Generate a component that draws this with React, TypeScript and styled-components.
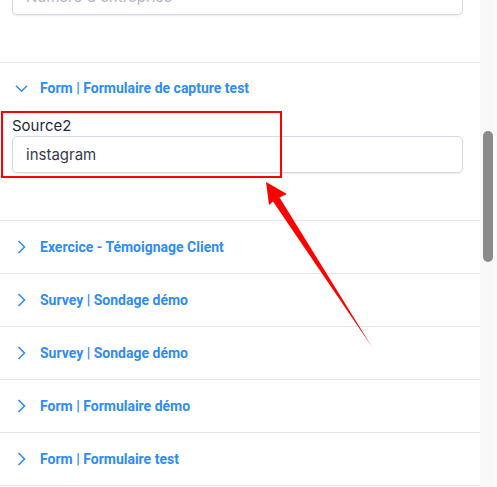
import React from "react";
import styled, { createGlobalStyle } from "styled-components";

const Global = createGlobalStyle`
  html, body { margin: 0; padding: 0; background: #ffffff; overflow: hidden; }
  body { width: 497px; height: 487px; }
  * { box-sizing: border-box; }
`;

const Frame = styled.div`
  position: relative;
  display: flex;
  width: 497px;
  height: 487px;
  overflow: hidden;
`;

const Content = styled.div`
  width: 480px;
  flex: none;
  display: flex;
  flex-direction: column;
`;

const TopField = styled.div`
  padding: 0 17px 0 12px;
  margin-top: -22px;
  height: 84px;
`;

const TextInput = styled.div<{ $placeholder?: boolean }>`
  height: 37px;
  border: 1px solid #d6d9e1;
  border-radius: 5px;
  box-shadow: 0 1px 2px rgba(30, 40, 70, 0.1);
  display: flex;
  align-items: center;
  padding: 0 13px;
  font-family: Inter, "Noto Sans", sans-serif;
  font-size: 15px;
  color: ${(p) => (p.$placeholder ? "#b3b6bd" : "#353b4b")};
`;

const Section = styled.div`
  border-top: 1px solid #e6e7ea;
`;

const Header = styled.div<{ $height: number }>`
  height: ${(p) => p.$height}px;
  display: flex;
  align-items: center;
  gap: 12px;
  padding-left: 15px;
  font-family: Roboto, "Liberation Sans", sans-serif;
  font-weight: 700;
  font-size: 14px;
  color: #2f8cf3;
`;

const IconBox = styled.span`
  width: 13px;
  height: 14px;
  display: flex;
  align-items: center;
  justify-content: center;
`;

const Body = styled.div`
  padding: 3px 17px 47px 12px;
  display: flex;
  flex-direction: column;
`;

const Label = styled.div`
  font-family: Inter, "Noto Sans", sans-serif;
  font-size: 15px;
  line-height: 20px;
  color: #1f2937;
`;

const Track = styled.div`
  width: 17px;
  flex: none;
  background: #f9f9f9;
  border-right: 2px solid #fcfcfc;
  padding: 131px 0 0 3px;
`;

const Thumb = styled.div`
  width: 10px;
  height: 131px;
  border-radius: 5px;
  background: #8b8b8b;
`;

const Highlight = styled.div`
  position: absolute;
  left: 1px;
  top: 111px;
  width: 281px;
  height: 67px;
  border: 2px solid #ff0000;
  pointer-events: none;
`;

const Overlay = styled.svg`
  position: absolute;
  left: 0;
  top: 0;
  pointer-events: none;
`;

const Chevron = ({ open }: { open?: boolean }) =>
  open ? (
    <svg width="14" height="9" viewBox="0 0 14 9">
      <path d="M1 1.5 L7 7.5 L13 1.5" fill="none" stroke="#2f8cf3" strokeWidth="1.6" />
    </svg>
  ) : (
    <svg width="9" height="14" viewBox="0 0 9 14">
      <path d="M1.5 1 L7.5 7 L1.5 13" fill="none" stroke="#2f8cf3" strokeWidth="1.6" />
    </svg>
  );

const collapsed = [
  "Exercice - Témoignage Client",
  "Survey | Sondage démo",
  "Survey | Sondage démo",
  "Form | Formulaire démo",
  "Form | Formulaire test",
];

export default function App() {
  return (
    <>
      <Global />
      <Frame>
        <Content>
          <TopField>
            <TextInput $placeholder>Numéro d'entreprise</TextInput>
          </TopField>
          <Section>
            <Header $height={50}>
              <IconBox>
                <Chevron open />
              </IconBox>
              Form | Formulaire de capture test
            </Header>
            <Body>
              <Label>Source2</Label>
              <TextInput>instagram</TextInput>
            </Body>
          </Section>
          {collapsed.map((t, i) => (
            <Section key={i}>
              <Header $height={52}>
                <IconBox>
                  <Chevron />
                </IconBox>
                {t}
              </Header>
            </Section>
          ))}
          <Section />
        </Content>
        <Track>
          <Thumb />
        </Track>
        <Highlight />
        <Overlay width="497" height="487" viewBox="0 0 497 487">
          <polygon
            points="266,182 287,194 279.5,197.5 372,347 273,201.5 269,205"
            fill="#ff0000"
          />
        </Overlay>
      </Frame>
    </>
  );
}
